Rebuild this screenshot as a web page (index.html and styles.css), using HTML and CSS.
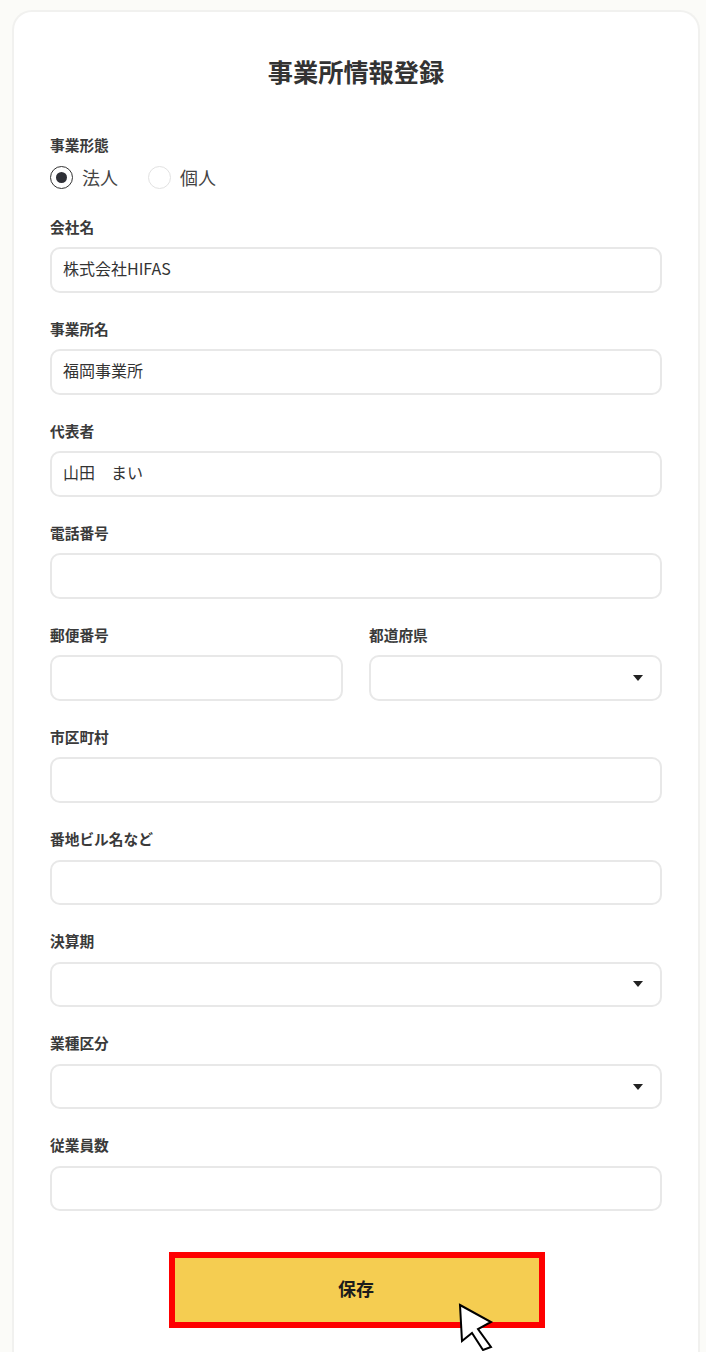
FILE: index.html
```html
<!DOCTYPE html>
<html lang="ja">
<head>
    <meta charset="UTF-8">
    <meta name="viewport" content="width=device-width, initial-scale=1.0">
    <title>事業所情報登録</title>
    <link rel="stylesheet" href="styles.css">
</head>
<body>
    <div class="card">
        <h1 class="title">事業所情報登録</h1>
        <form>
            <div class="form-group radio-group">
                <span class="label">事業形態</span>
                <div class="radio-row">
                    <label class="radio"><input type="radio" name="type" checked>法人</label>
                    <label class="radio"><input type="radio" name="type">個人</label>
                </div>
            </div>

            <div class="form-group">
                <label class="label" for="company">会社名</label>
                <input class="field" id="company" type="text" value="株式会社HIFAS">
            </div>

            <div class="form-group">
                <label class="label" for="office">事業所名</label>
                <input class="field" id="office" type="text" value="福岡事業所">
            </div>

            <div class="form-group">
                <label class="label" for="rep">代表者</label>
                <input class="field" id="rep" type="text" value="山田　まい">
            </div>

            <div class="form-group">
                <label class="label" for="phone">電話番号</label>
                <input class="field" id="phone" type="text">
            </div>

            <!-- 郵便番号 / 都道府県 -->
            <div class="row">
                <div class="form-group">
                    <label class="label" for="zip">郵便番号</label>
                    <input class="field" id="zip" type="text">
                </div>
                <div class="form-group">
                    <label class="label" for="pref">都道府県</label>
                    <div class="select-wrap"><select class="field" id="pref"></select></div>
                </div>
            </div>

            <div class="form-group">
                <label class="label" for="city">市区町村</label>
                <input class="field" id="city" type="text">
            </div>

            <div class="form-group">
                <label class="label" for="street">番地ビル名など</label>
                <input class="field" id="street" type="text">
            </div>

            <div class="form-group">
                <label class="label" for="term">決算期</label>
                <div class="select-wrap"><select class="field" id="term"></select></div>
            </div>

            <div class="form-group">
                <label class="label" for="industry">業種区分</label>
                <div class="select-wrap"><select class="field" id="industry"></select></div>
            </div>

            <div class="form-group">
                <label class="label" for="staff">従業員数</label>
                <input class="field" id="staff" type="text">
            </div>

            <div class="button-wrap">
                <button class="save-button" type="button">保存</button>
                <svg class="cursor" width="36" height="48" viewBox="0 0 36 48">
                    <path d="M2 2 L33 19 L20 26 L33 44 L25 47 L14 30 L4 38 Z" fill="#fff" stroke="#000" stroke-width="2"/>
                </svg>
            </div>
        </form>
    </div>
</body>
</html>
```

FILE: styles.css
```css
html, body {
    height: 1352px;
    overflow: hidden;
}

body {
    margin: 0;
    padding: 10px 6px 0 12px;
    box-sizing: border-box;
    background-color: #fbfbf8;
    color: #2f3033;
    font-family: "Noto Sans CJK JP", "Noto Sans", sans-serif;
}

/* card runs off the bottom of the shot, so no bottom edge */
.card {
    height: 1342px;
    box-sizing: border-box;
    background-color: #fff;
    border: 2px solid #f1f1ef;
    border-bottom: 0;
    border-radius: 20px 20px 0 0;
    padding: 42px 36px 0;
}

.title {
    margin: -2px 0 45px;
    font-size: 25.2px;
    font-weight: 700;
    line-height: 38px;
    text-align: center;
    color: #333;
}

.form-group {
    margin-bottom: 26px;
}

.radio-group {
    margin-bottom: 26.5px;
}

.label {
    display: block;
    margin-bottom: 10.5px;
    font-size: 14.7px;
    font-weight: 700;
    line-height: 20px;
    color: #3a3a3a;
}

.radio-group .label {
    margin-bottom: 9px;
}

.radio-row {
    display: flex;
    gap: 30px;
    margin-top: 1px;
}

.radio {
    display: flex;
    align-items: center;
    gap: 9px;
    font-size: 18px;
    line-height: 26px;
    color: #444;
}

.radio input {
    appearance: none;
    display: flex;
    align-items: center;
    justify-content: center;
    width: 23px;
    height: 23px;
    margin: 0;
    background: #fff;
    border: 1.5px solid #e2e2e2;
    border-radius: 50%;
}

.radio input:checked {
    border-color: #333;
}

.radio input:checked::before {
    content: "";
    width: 11px;
    height: 11px;
    background: #2f3037;
    border-radius: 50%;
}

.field {
    display: block;
    width: 100%;
    height: 45.6px;
    padding: 0 11px 4px;
    box-sizing: border-box;
    appearance: none;
    background: #fff;
    border: 2px solid #e8e8e8;
    border-radius: 10px;
    color: #333;
    font-family: inherit;
    font-size: 16px;
    outline: none;
}

.row {
    display: grid;
    grid-template-columns: 293px 293px;
    justify-content: space-between;
}

.select-wrap {
    position: relative;
}

.select-wrap::after {
    content: "";
    position: absolute;
    right: 19px;
    top: 50%;
    margin-top: -3px;
    border-left: 5px solid transparent;
    border-right: 5px solid transparent;
    border-top: 6px solid #222;
}

.button-wrap {
    position: relative;
    display: flex;
    justify-content: center;
    margin-top: 40.5px;
}

.save-button {
    width: 376px;
    height: 76px;
    margin-left: 2px;
    padding: 0 2px 3px 0;
    box-sizing: border-box;
    background-color: #f5cd51;
    border: 6px solid #fe0000;
    color: #1c1c1c;
    font-family: inherit;
    font-size: 18px;
    font-weight: 700;
}

.cursor {
    position: absolute;
    left: 408px;
    top: 51px;
}
```
